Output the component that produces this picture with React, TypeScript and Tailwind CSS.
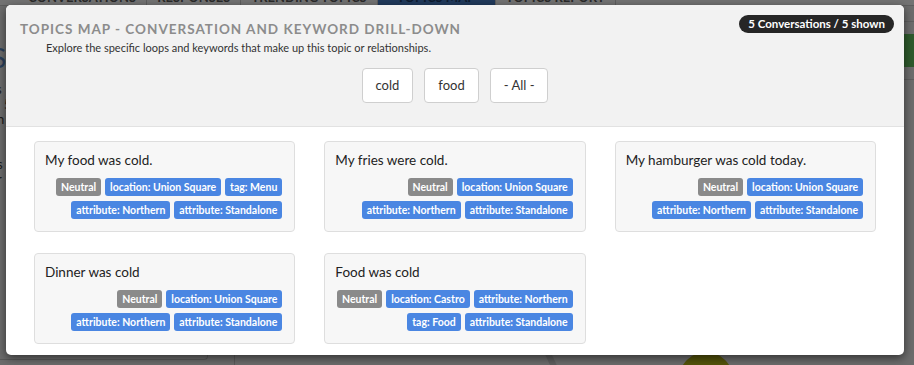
import React from "react";

type Tag = { label: string; kind: "neutral" | "meta" };

interface Conversation {
  text: string;
  tags: Tag[];
}

const n = (label: string): Tag => ({ label, kind: "neutral" });
const m = (label: string): Tag => ({ label, kind: "meta" });

const conversations: Conversation[] = [
  {
    text: "My food was cold.",
    tags: [n("Neutral"), m("location: Union Square"), m("tag: Menu"), m("attribute: Northern"), m("attribute: Standalone")],
  },
  {
    text: "My fries were cold.",
    tags: [n("Neutral"), m("location: Union Square"), m("attribute: Northern"), m("attribute: Standalone")],
  },
  {
    text: "My hamburger was cold today.",
    tags: [n("Neutral"), m("location: Union Square"), m("attribute: Northern"), m("attribute: Standalone")],
  },
  {
    text: "Dinner was cold",
    tags: [n("Neutral"), m("location: Union Square"), m("attribute: Northern"), m("attribute: Standalone")],
  },
  {
    text: "Food was cold",
    tags: [n("Neutral"), m("location: Castro"), m("attribute: Northern"), m("tag: Food"), m("attribute: Standalone")],
  },
];

const keywords = ["cold", "food", "- All -"];

const tabs = ["CONVERSATIONS", "RESPONSES", "TRENDING TOPICS", "TOPICS MAP", "TOPICS REPORT"];

function ConversationCard({ conversation }: { conversation: Conversation }) {
  return (
    <div className="flex h-[91px] flex-col rounded border border-[#dedede] bg-[#f7f7f7] pl-[10px] pr-[12px] pt-[10px]">
      <p className="text-[13.5px] leading-[16px] text-[#222]">{conversation.text}</p>
      <div className="mt-[10px] flex flex-wrap justify-end gap-x-[4px] gap-y-[5px]">
        {conversation.tags.map((tag) => (
          <span
            key={tag.label}
            className={
              tag.kind === "neutral"
                ? "rounded-[3px] bg-[#8a8a8a] px-[5px] text-[10.5px] font-bold leading-[18px] text-white"
                : "rounded-[3px] bg-[#4a86e2] px-[5px] text-[10.5px] font-bold leading-[18px] text-white"
            }
          >
            {tag.label}
          </span>
        ))}
      </div>
    </div>
  );
}

export default function App() {
  return (
    <div
      className="relative h-[365px] w-[914px] overflow-hidden bg-[#6c6c6c]"
      style={{ fontFamily: "Lato, 'Open Sans', sans-serif" }}
    >
      {/* dimmed app behind the modal */}
      <div className="-mt-[12px] flex h-[18px] border-b border-[#5e5e5e] bg-[#737373] pl-[18px] text-[13px] font-bold leading-[18px] text-[#2a2a2a]">
        {tabs.map((t, i) => (
          <div
            key={t}
            className={
              i === 3
                ? "w-[118px] border-r border-[#5e5e5e] bg-[#213a5c] text-center text-[#0e1c30]"
                : "border-r border-[#5e5e5e] px-[10px] text-center"
            }
          >
            {t}
          </div>
        ))}
      </div>
      <div className="flex">
        <div className="w-[210px] pl-0 pt-[20px] text-[13px] leading-[15px] text-[#1a1a1a]">
          <p className="-ml-[8px] pt-[18px] text-[26px] leading-[28px] text-[#2a3f5c]">S</p>
          <p className="mt-[10px] -ml-[4px]">s</p>
          <p className="ml-[4px]">5</p>
          <p className="-ml-[3px]">n</p>
          <p className="-ml-[3px] text-[#24406a]">:</p>
          <p className="-ml-[3px]">i</p>
          <p className="-ml-[3px]">s</p>
          <p className="-ml-[3px]">r</p>
        </div>
        <div className="flex flex-1 justify-end pt-[15px]">
          <div className="flex h-[60px] w-[10px] flex-col">
            <div className="h-px bg-[#5e5e5e]" />
            <div className="mt-[12px] h-[33px] bg-[#2e5a2c]" />
            <div className="mt-[12px] h-px bg-[#5e5e5e]" />
          </div>
        </div>
      </div>
      <div className="absolute left-0 top-[300px] h-[60px] w-[208px] rounded-br border-b border-r border-[#5a5a5a]" />
      <div className="absolute left-[234px] top-[340px] h-[30px] w-px bg-[#5a5a5a]" />
      <div className="absolute left-[548px] top-[345px] h-[30px] w-[6px] rotate-[-25deg] bg-[#5f5f5f]" />
      <div className="absolute left-[679px] top-[352px] h-[54px] w-[54px] rounded-full bg-[#55540a]" />

      {/* modal */}
      <div className="absolute left-[6px] top-[5px] flex h-[350px] w-[898px] flex-col overflow-hidden rounded-[5px] bg-white shadow-[0_3px_10px_rgba(0,0,0,0.55)]">
        <div className="relative h-[122px] border-b border-[#e2e2e2] bg-[#f2f2f2] pl-[14px] pt-[16px]">
          <h2 className="text-[13.5px] font-bold uppercase leading-[16px] tracking-[1px] text-[#8c8c8c]">
            Topics Map - Conversation and Keyword Drill-Down
          </h2>
          <p className="ml-[26px] mt-[4px] text-[11px] leading-[14px] text-[#333]">
            Explore the specific loops and keywords that make up this topic or relationships.
          </p>
          <div className="mt-[13px] flex justify-center gap-[11px] pr-[14px]">
            {keywords.map((k) => (
              <button
                key={k}
                className="h-[35px] rounded border border-[#cfcfcf] bg-white px-[13px] text-[13px] text-[#333]"
              >
                {k}
              </button>
            ))}
          </div>
          <span className="absolute right-[10px] top-[10px] rounded-full bg-[#262626] px-[9px] text-[11.5px] font-bold leading-[18px] text-white">
            5 Conversations / 5 shown
          </span>
        </div>
        <div className="grid grid-cols-3 gap-x-[29px] gap-y-[21px] px-[28px] pt-[14px]">
          {conversations.map((c) => (
            <ConversationCard key={c.text} conversation={c} />
          ))}
        </div>
      </div>
    </div>
  );
}
